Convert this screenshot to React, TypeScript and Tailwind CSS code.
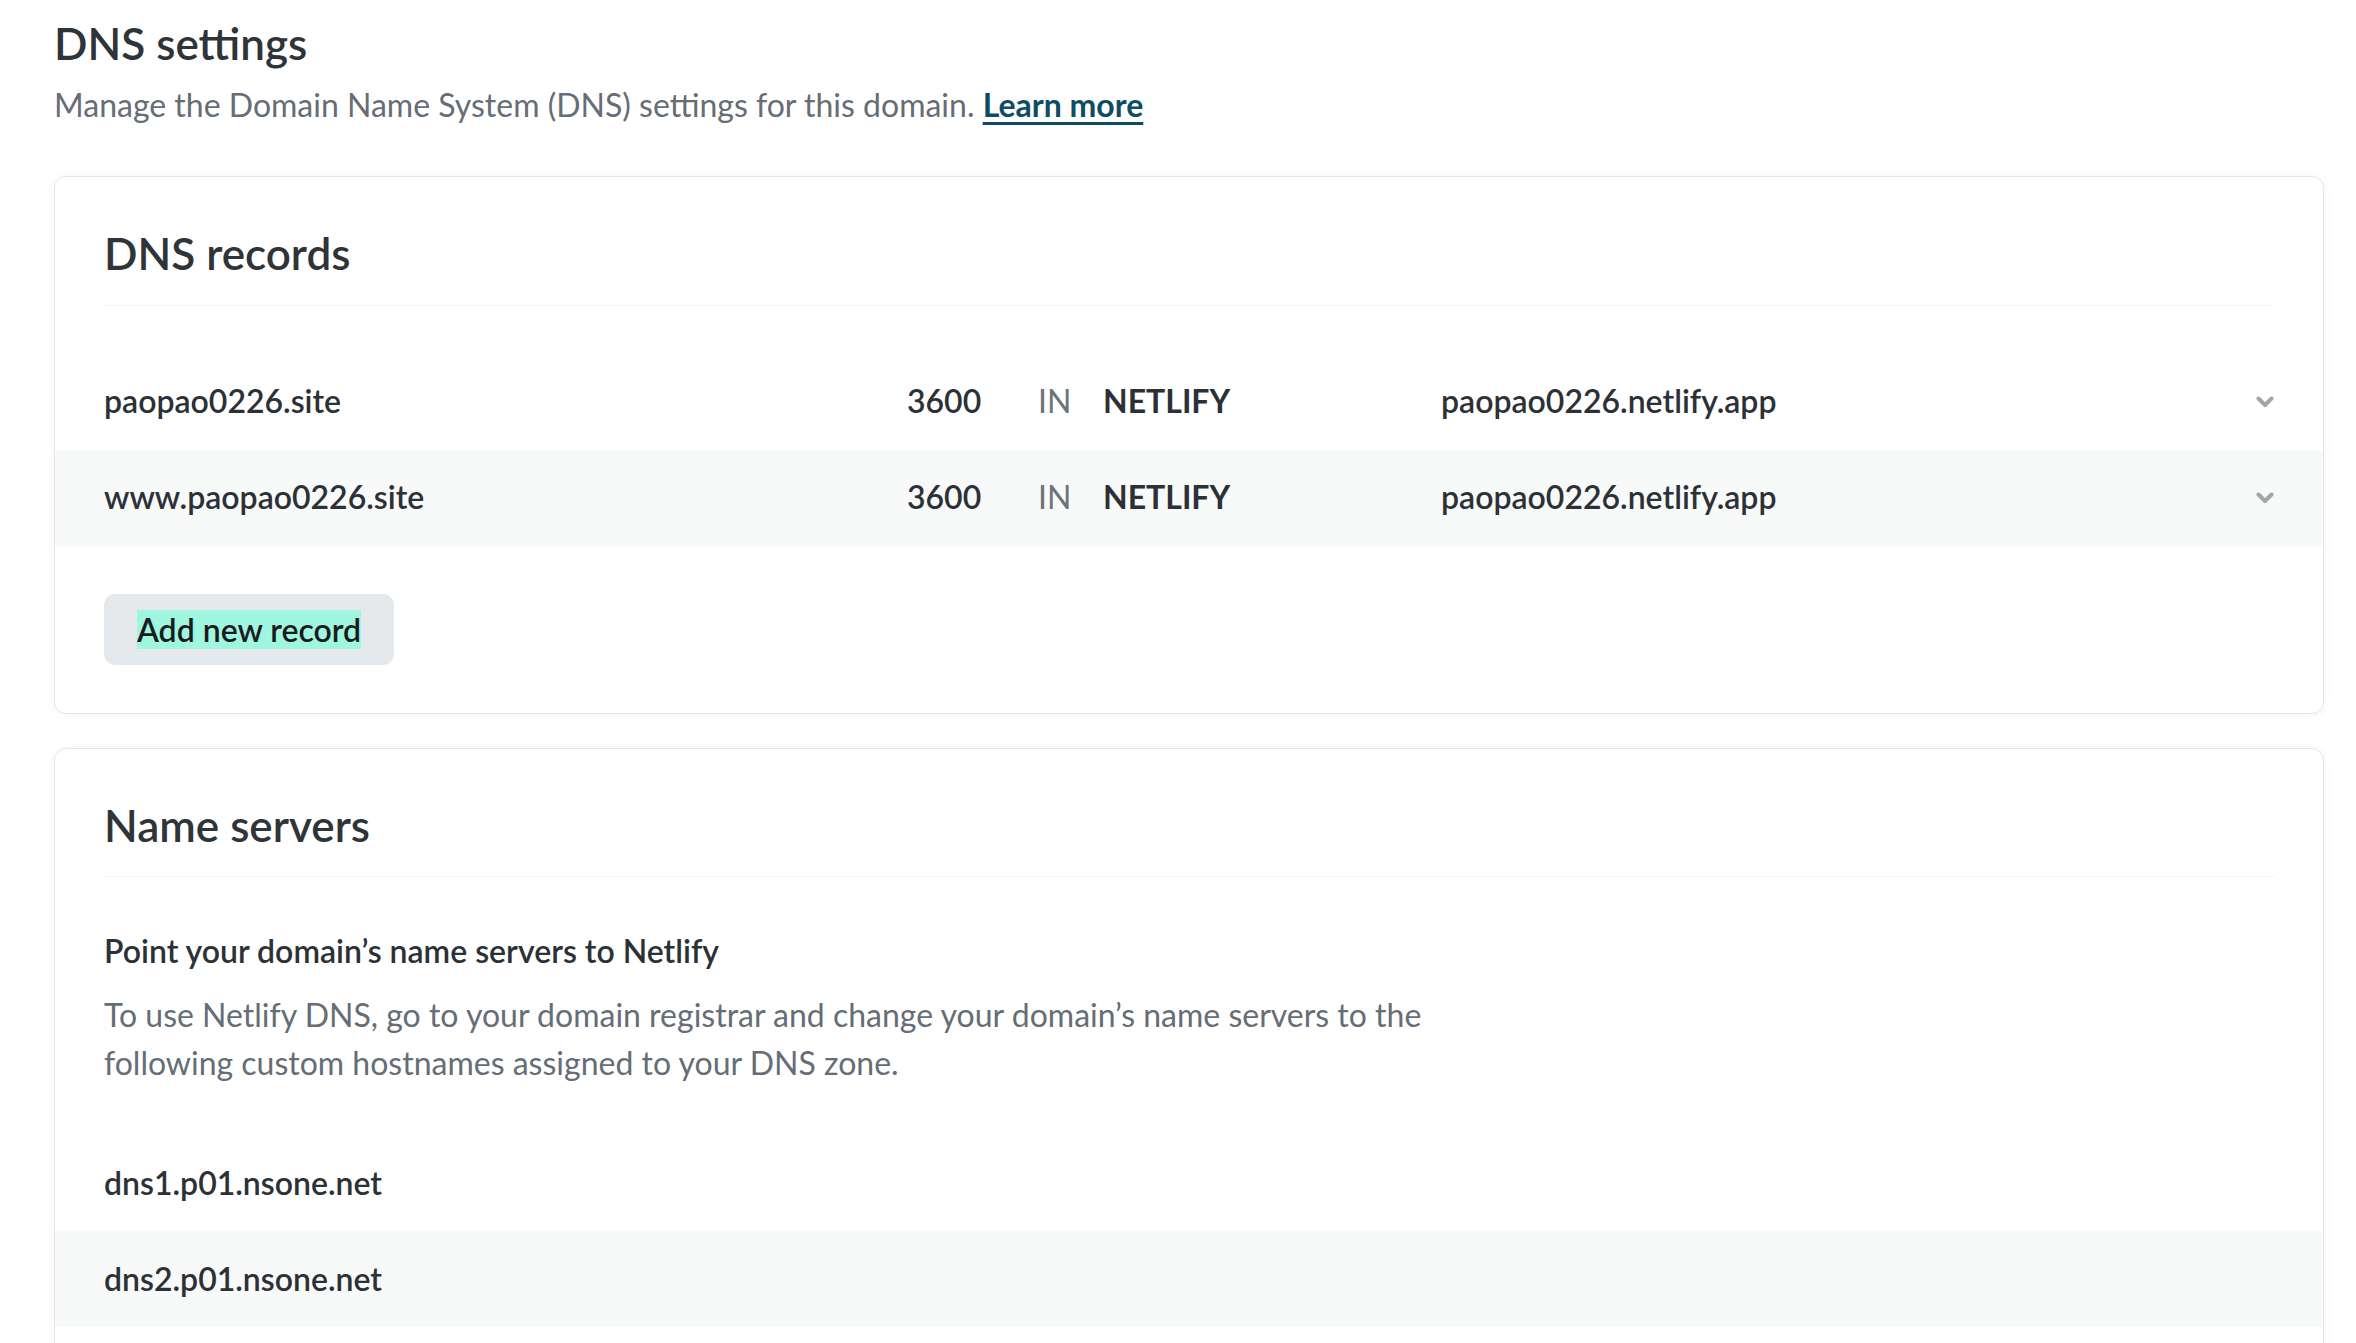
const RECORDS = [
  { name: "paopao0226.site", ttl: "3600", cls: "IN", type: "NETLIFY", value: "paopao0226.netlify.app" },
  { name: "www.paopao0226.site", ttl: "3600", cls: "IN", type: "NETLIFY", value: "paopao0226.netlify.app" },
];

const NAME_SERVERS = ["dns1.p01.nsone.net", "dns2.p01.nsone.net"];

function Chevron() {
  return (
    <svg width="18" height="12" viewBox="0 0 18 12" fill="none" className="shrink-0">
      <path d="M2.5 2.5 L9 9 L15.5 2.5" stroke="#a3a6a9" strokeWidth="4" strokeLinecap="round" strokeLinejoin="round" />
    </svg>
  );
}

function Card({ title, children }: { title: string; children: React.ReactNode }) {
  return (
    <section className="rounded-[12px] border border-[#e4e7ea] bg-white pt-[50px] shadow-[0_1px_10px_rgba(0,0,0,0.05)]">
      <div className="px-[49px]">
        <h2 className="border-b border-[#f2f3f4] pb-[25px] text-[44px] font-semibold leading-[1.2] text-[#2f3439]">
          {title}
        </h2>
      </div>
      {children}
    </section>
  );
}

export default function App() {
  return (
    <div className="min-h-screen bg-white px-[54px] pt-[17px] font-['Lato','Noto_Sans',sans-serif] text-[#2c3137]">
      {/* Page header */}
      <h1 className="text-[44px] font-semibold leading-[1.2] text-[#2f3439]">DNS settings</h1>
      <p className="mt-[11px] text-[32px] leading-[1.5] text-[#656d76]">
        Manage the Domain Name System (DNS) settings for this domain.{" "}
        <a href="#" className="font-bold text-[#0c4d63] underline decoration-[3px] underline-offset-[5px]">
          Learn more
        </a>
      </p>

      <div className="mt-[47px] w-[2270px]">
        {/* DNS records */}
        <Card title="DNS records">
          <div className="mt-[48px]">
            {RECORDS.map((r, i) => (
              <div
                key={r.name}
                className={`flex h-[96px] items-center px-[49px] text-[32px] leading-[1.2] ${i % 2 === 1 ? "bg-[#f8f9f9]" : ""}`}
              >
                <span className="w-[803px] font-semibold">{r.name}</span>
                <span className="w-[131px] font-semibold">{r.ttl}</span>
                <span className="w-[65px] text-[#6b737c]">{r.cls}</span>
                <span className="w-[338px] font-bold">{r.type}</span>
                <span className="flex-1 font-semibold">{r.value}</span>
                <Chevron />
              </div>
            ))}
          </div>
          <div className="px-[49px] pb-[48px] pt-[48px]">
            <button className="rounded-[11px] bg-[#e6e9ec] px-[33px] py-[14px] text-[32px] font-semibold leading-[43px] text-[#181c20]">
              <span className="bg-[#9ff7df]">Add new record</span>
            </button>
          </div>
        </Card>

        {/* Name servers */}
        <div className="mt-[34px]">
          <Card title="Name servers">
            <div className="px-[49px] pt-[50px]">
              <h3 className="text-[32px] font-semibold leading-[1.5] text-[#2c3137]">
                Point your domain’s name servers to Netlify
              </h3>
              <p className="mt-[16px] max-w-[1400px] text-[32px] leading-[1.5] text-[#656d76]">
                To use Netlify DNS, go to your domain registrar and change your domain’s name servers to the
                following custom hostnames assigned to your DNS zone.
              </p>
            </div>
            <div className="mt-[48px] pb-[48px]">
              {NAME_SERVERS.map((ns, i) => (
                <div
                  key={ns}
                  className={`flex h-[96px] items-center px-[49px] text-[32px] font-semibold leading-[1.2] ${i % 2 === 1 ? "bg-[#f8f9f9]" : ""}`}
                >
                  {ns}
                </div>
              ))}
            </div>
          </Card>
        </div>
      </div>
    </div>
  );
}
